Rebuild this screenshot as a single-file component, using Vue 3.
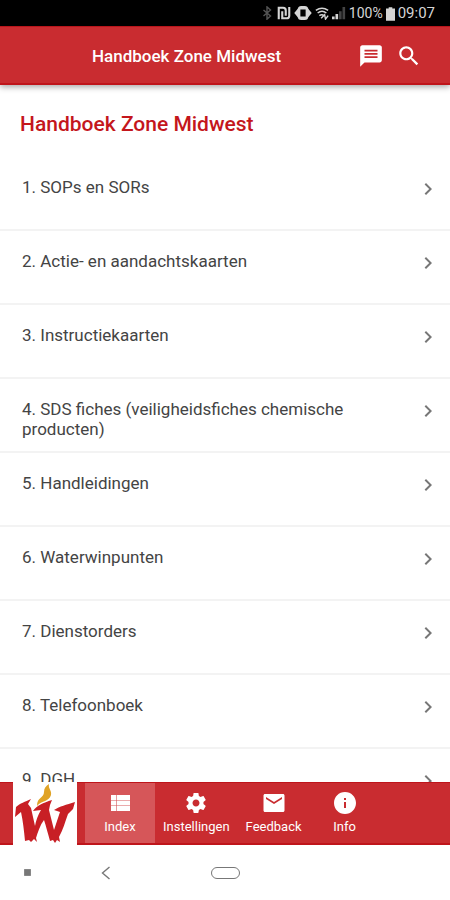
<script setup>
import { ref } from 'vue'

const chapters = [
  '1. SOPs en SORs',
  '2. Actie- en aandachtskaarten',
  '3. Instructiekaarten',
  '4. SDS fiches (veiligheidsfiches chemische producten)',
  '5. Handleidingen',
  '6. Waterwinpunten',
  '7. Dienstorders',
  '8. Telefoonboek',
  '9. DGH',
]

const tabs = [
  { label: 'Index', icon: 'M3 4h5v5H3zM3 9.500h5v5H3zM3 15h5v5H3zM8.600 4H22v5H8.600zM8.600 9.500H22v5H8.600zM8.600 15H22v5H8.600z' },
  { label: 'Instellingen', icon: 'M19.43 12.98c.04-.32.07-.64.07-.98s-.03-.66-.07-.98l2.11-1.65c.19-.15.24-.42.12-.64l-2-3.46c-.12-.22-.39-.3-.61-.22l-2.49 1c-.52-.4-1.08-.73-1.69-.98l-.38-2.65C14.46 2.18 14.25 2 14 2h-4c-.25 0-.46.18-.49.42l-.38 2.65c-.61.25-1.17.59-1.69.98l-2.49-1c-.23-.09-.49 0-.61.22l-2 3.46c-.13.22-.07.49.12.64l2.11 1.65c-.04.32-.07.65-.07.98s.03.66.07.98l-2.11 1.65c-.19.15-.24.42-.12.64l2 3.46c.12.22.39.3.61.22l2.49-1c.52.4 1.08.73 1.69.98l.38 2.65c.03.24.24.42.49.42h4c.25 0 .46-.18.49-.42l.38-2.65c.61-.25 1.17-.59 1.69-.98l2.49 1c.23.09.49 0 .61-.22l2-3.46c.12-.22.07-.49-.12-.64l-2.11-1.65zM12 15.5c-1.93 0-3.5-1.57-3.5-3.5s1.57-3.5 3.5-3.5 3.5 1.57 3.5 3.5-1.57 3.5-3.5 3.5z' },
  { label: 'Feedback', icon: 'M21 3H3c-.8 0-1.500.7-1.500 1.500v15c0 .8.7 1.500 1.500 1.500h18c.8 0 1.500-.7 1.500-1.500v-15c0-.8-.7-1.500-1.500-1.500zm-1 5l-8 5-8-5V6l8 5 8-5v2z' },
  { label: 'Info', icon: 'M12 1C5.900 1 1 5.900 1 12s4.900 11 11 11 11-4.900 11-11S18.100 1 12 1zm1 16h-2v-6h2v6zm0-8h-2V7h2v2z' },
]

const activeTab = ref('Index')
</script>

<template>
  <div class="screen">
    <div class="status">
      <svg class="glyph dim" viewBox="0 0 16 16" aria-hidden="true">
        <path d="M4 4.500l8 7-4 3.500V1l4 3.500-8 7" fill="none" stroke="currentColor" stroke-width="1.600" />
      </svg>
      <svg class="glyph" viewBox="0 0 16 16" aria-hidden="true">
        <path d="M2 15V2h5q3 0 3 3v6M14 1v10q0 3-3 3H6V6" fill="none" stroke="currentColor" stroke-width="2.400" />
      </svg>
      <svg class="glyph wide" viewBox="0 0 20 16" aria-hidden="true">
        <path d="M5 2v12L0 8zM15 2v12l5-6z" fill="currentColor" />
        <rect x="4" y="0" width="12" height="16" rx="4" fill="currentColor" />
        <rect x="7" y="4" width="6" height="8" fill="#000" />
      </svg>
      <svg class="glyph" viewBox="0 0 16 16" aria-hidden="true">
        <path d="M1 5q7-5 14 0M3 8q5-4 10 0M5 11q3-2 5 0" fill="none" stroke="currentColor" stroke-width="1.700" />
        <path d="M7 14l4-4 1 5 3-4" fill="none" stroke="currentColor" stroke-width="1.600" />
      </svg>
      <svg class="glyph" viewBox="0 0 16 16" aria-hidden="true">
        <path d="M0 15v-3h3v3zM4 15v-6h3v6z" fill="currentColor" />
        <path d="M8 15V6h3v9zM12 15V1h3v14z" fill="#444" />
      </svg>
      <span class="battery-text">100%</span>
      <svg class="battery" viewBox="0 0 10 16" aria-hidden="true">
        <path d="M3 1h4v1.500h3V16H0V2.500h3z" fill="currentColor" />
      </svg>
      <span class="clock">09:07</span>
    </div>

    <header class="appbar">
      <h1 class="appbar-title">Handboek Zone Midwest</h1>
      <button class="action" type="button" aria-label="Berichten">
        <svg viewBox="0 0 24 24" aria-hidden="true">
          <path d="M20 2H4c-1.100 0-1.990.9-1.990 2L2 22l4-4h14c1.100 0 2-.9 2-2V4c0-1.100-.9-2-2-2z" fill="currentColor" />
          <path d="M6 7h12M6 10h12M6 13h12" stroke="#c92c30" stroke-width="1.700" />
        </svg>
      </button>
      <button class="action" type="button" aria-label="Zoeken">
        <svg viewBox="0 0 24 24" aria-hidden="true">
          <path d="M15.500 14h-.79l-.28-.27C15.410 12.590 16 11.110 16 9.500 16 5.910 13.090 3 9.500 3S3 5.910 3 9.500 5.910 16 9.500 16c1.610 0 3.090-.59 4.230-1.570l.27.28v.79l5 4.990L20.490 19l-4.990-5zm-6 0C7.010 14 5 11.990 5 9.500S7.010 5 9.500 5 14 7.010 14 9.500 11.990 14 9.500 14z" fill="currentColor" />
        </svg>
      </button>
    </header>

    <main class="content">
      <h2 class="heading">Handboek Zone Midwest</h2>
      <ul class="list">
        <li v-for="chapter in chapters" :key="chapter">
          <a class="row" href="#">
            <span class="row-label">{{ chapter }}</span>
            <svg class="chevron" viewBox="0 0 24 24" aria-hidden="true">
              <path d="M8.600 16.600L13.200 12 8.600 7.400 10 6l6 6-6 6z" fill="currentColor" />
            </svg>
          </a>
        </li>
      </ul>
    </main>

    <nav class="tabbar">
      <div class="logo">
        <svg viewBox="0 0 64 63" aria-hidden="true">
          <path d="M24 24C24 15 31 16 31 10c0-4 2-6 5-8-1 5 3 6 2 11-2 7-9 5-14 11z" fill="#e0a326" />
          <path d="M2 35l1-10c4-4 9-5 15-8l-3 5 3 4 4 18c1-6 3-11 6-16l-8 1c4-6 10-8 19-11l-2 5-1 5 5 20c2-6 4-12 6-18l-6-2c6-4 12-5 21-8l-2 7-5 5c-3 8-5 16-9 23l1 5-3-2-2 3-2-3-3 1c-2-7-4-15-6-21-4 5-6 12-8 18l1 4-3-3-3 3-2-2-4 1C11 49 10 39 8 30z" fill="#c81f25" />
        </svg>
      </div>
      <button
        v-for="tab in tabs"
        :key="tab.label"
        type="button"
        class="tab"
        :class="{ active: tab.label === activeTab }"
        @click="activeTab = tab.label"
      >
        <svg viewBox="0 0 24 24" aria-hidden="true"><path :d="tab.icon" fill="currentColor" /></svg>
        <span>{{ tab.label }}</span>
      </button>
    </nav>

    <div class="sysbar">
      <svg class="dot" viewBox="0 0 8 8" aria-hidden="true"><rect x="1" y="1" width="6" height="6" fill="#777" /></svg>
      <button class="sys" type="button" aria-label="Terug">
        <svg class="back" viewBox="0 0 10 14" aria-hidden="true">
          <path d="M9 1L2 7l7 6" fill="none" stroke="#777" stroke-width="1.400" />
        </svg>
      </button>
      <button class="sys" type="button" aria-label="Startscherm"><span class="pill"></span></button>
    </div>
  </div>
</template>

<style>
body {
  margin: 0;
  background: #fff;
}
</style>

<style scoped>
.screen {
  display: flex;
  flex-direction: column;
  height: 100vh;
  font-family: Roboto, "Liberation Sans", sans-serif;
  color: #444;
  background: #fff;
}
button {
  border: 0;
  padding: 0;
  background: none;
  color: inherit;
  font: inherit;
  cursor: pointer;
}
svg {
  display: block;
}
.status {
  flex: none;
  display: flex;
  align-items: center;
  justify-content: flex-end;
  gap: 3px;
  height: 26px;
  padding-right: 15px;
  background: #000;
  color: #d5d5d5;
}
.glyph {
  width: 14px;
  height: 14px;
}
.glyph.wide {
  width: 18px;
}
.glyph.dim {
  color: #555;
}
.battery-text {
  font-size: 14px;
}
.battery {
  width: 9px;
  height: 15px;
}
.clock {
  font-size: 15px;
}
.appbar {
  position: relative;
  flex: none;
  display: flex;
  align-items: center;
  gap: 12px;
  box-sizing: border-box;
  height: 59px;
  padding: 1px 28px 0 92px;
  border-top: 1px solid #b9151b;
  border-bottom: 2px solid #bf151b;
  background: #c92c30;
  color: #fff;
  box-shadow: 0 2px 6px rgba(0, 0, 0, 0.35);
}
.appbar-title {
  flex: 1;
  margin: 0;
  font-size: 17px;
  font-weight: 500;
  white-space: nowrap;
}
.action svg {
  width: 26px;
  height: 26px;
}
.content {
  flex: 1;
  min-height: 0;
  overflow: hidden;
}
.heading {
  margin: 0;
  padding: 27px 20px 21px;
  font-size: 21px;
  font-weight: 500;
  line-height: 24px;
  color: #c4161c;
}
.list {
  margin: 0;
  padding: 0;
  list-style: none;
}
.row {
  display: flex;
  align-items: flex-start;
  justify-content: space-between;
  box-sizing: border-box;
  min-height: 74px;
  padding: 20px 10px 10px 22px;
  border-bottom: 2px solid #f3f3f3;
  color: inherit;
  text-decoration: none;
}
.row-label {
  max-width: 340px;
  font-size: 17px;
  line-height: 20px;
}
.chevron {
  flex: none;
  width: 24px;
  height: 24px;
  color: #777;
}
.tabbar {
  flex: none;
  display: flex;
  box-sizing: border-box;
  height: 63px;
  padding-left: 13px;
  background: #c92c30;
  border-top: 1px solid #bf151b;
  border-bottom: 2px solid #bf151b;
  color: #fff;
}
.logo {
  width: 64px;
  height: 63px;
  margin: -1px 8px -2px 0;
  background: #fff;
}
.tab {
  display: flex;
  flex-direction: column;
  align-items: center;
  gap: 4px;
  min-width: 70px;
  padding: 8px 8px 0;
  font-size: 13px;
  line-height: 16px;
}
.tab.active {
  background: #d65659;
  color: #fff;
}
.tab svg {
  width: 24px;
  height: 24px;
}
.sysbar {
  flex: none;
  display: flex;
  align-items: center;
  height: 55px;
  padding-left: 23px;
}
.dot {
  width: 9px;
  height: 9px;
}
.sys {
  display: flex;
  margin-left: 68px;
}
.sys + .sys {
  margin-left: 100px;
}
.back {
  width: 11px;
  height: 14px;
}
.pill {
  box-sizing: border-box;
  width: 29px;
  height: 12px;
  border: 1px solid #777;
  border-radius: 6px;
}
</style>
